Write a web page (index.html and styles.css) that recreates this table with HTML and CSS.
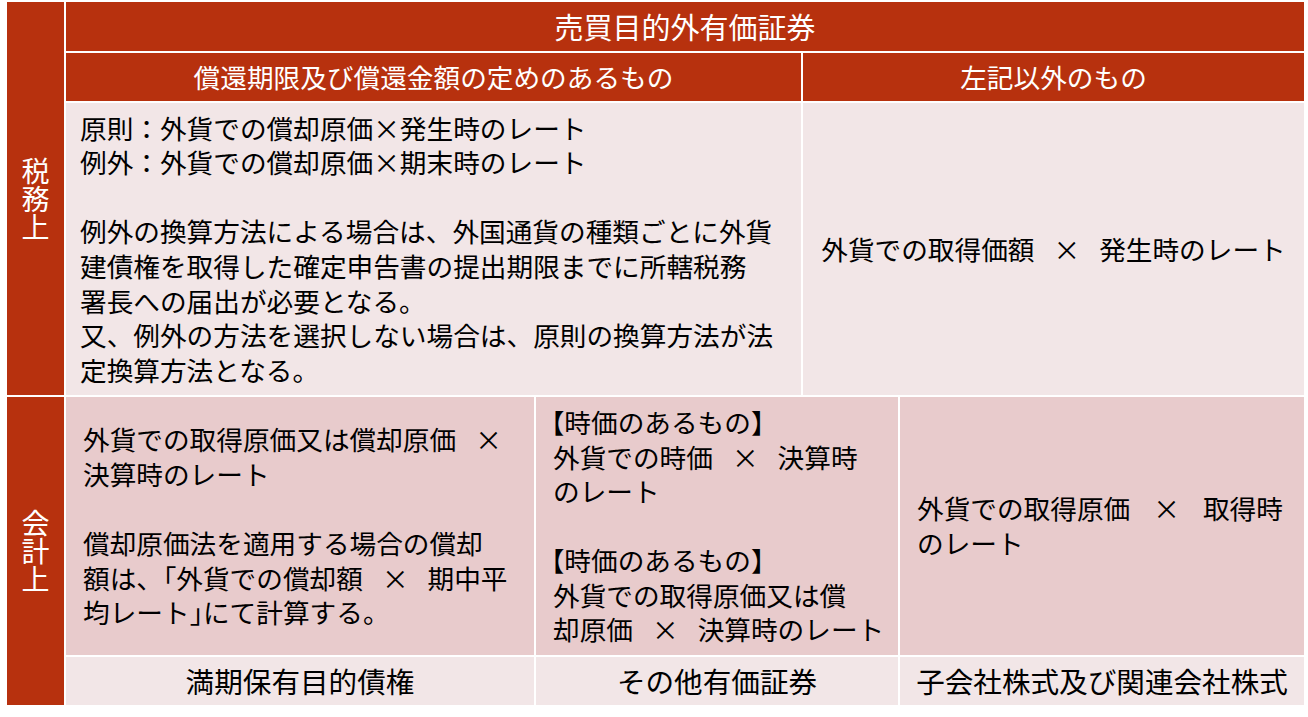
FILE: index.html
```html
<!DOCTYPE html>
<html lang="ja">
<head>
<meta charset="utf-8">
<title>売買目的外有価証券</title>
<link rel="stylesheet" href="styles.css">
</head>
<body>
<div class="table">
  <div class="label label-tax"><span class="vert">税務上</span></div>
  <div class="head head-main">売買目的外有価証券</div>
  <div class="head head-sub1">償還期限及び償還金額の定めのあるもの</div>
  <div class="head head-sub2">左記以外のもの</div>

  <div class="cell tax-left light">
    <div class="text">
      <p>原則：外貨での償却原価×発生時のレート<br>例外：外貨での償却原価×期末時のレート</p>
      <p class="gap">例外の換算方法による場合は、外国通貨の種類ごとに外貨<br>建債権を取得した確定申告書の提出期限までに所轄税務<br>署長への届出が必要となる。<br>又、例外の方法を選択しない場合は、原則の換算方法が法<br>定換算方法となる。</p>
    </div>
  </div>
  <div class="cell tax-right light center">
    <div class="text">外貨での取得価額<span class="mul">×</span>発生時のレート</div>
  </div>

  <div class="label label-acc"><span class="vert">会計上</span></div>
  <div class="cell acc-1 dark">
    <div class="text">
      <p>外貨での取得原価又は償却原価<span class="mul">×</span><br>決算時のレート</p>
      <p class="gap">償却原価法を適用する場合の償却<br>額は、<span class="br">「</span>外貨での償却額<span class="mul">×</span>期中平<br>均レート<span class="br">」</span>にて計算する。</p>
    </div>
  </div>
  <div class="cell acc-2 dark">
    <div class="text">
      <p><span class="br brl">【</span>時価のあるもの<span class="br">】</span><br>外貨での時価<span class="mul">×</span>決算時<br>のレート</p>
      <p class="gap"><span class="br brl">【</span>時価のあるもの<span class="br">】</span><br>外貨での取得原価又は償<br>却原価<span class="mul">×</span>決算時のレート</p>
    </div>
  </div>
  <div class="cell acc-3 dark">
    <div class="text">外貨での取得原価<span class="mul mul-wide">×</span>取得時<br>のレート</div>
  </div>

  <div class="foot foot-1">満期保有目的債権</div>
  <div class="foot foot-2">その他有価証券</div>
  <div class="foot foot-3">子会社株式及び関連会社株式</div>
</div>
</body>
</html>
```

FILE: styles.css
```css
html, body {
  margin: 0;
  padding: 0;
  background: #ffffff;
}

body {
  font-family: "Noto Sans CJK JP", "Noto Sans", sans-serif;
  color: #000000;
}

.table {
  display: grid;
  grid-template-columns: 57px 468px 265px 95px 404px;
  grid-template-rows: 49px 48px 292px 258px 48px;
  gap: 2px;
  padding: 2px 0 0 7px;
  width: 1297px;
  background: #ffffff;
}

.label {
  background: #b7310e;
  color: #ffffff;
  display: flex;
  align-items: center;
  justify-content: center;
}

.vert {
  writing-mode: vertical-rl;
  text-orientation: upright;
  font-size: 28px;
  line-height: 28px;
  letter-spacing: 0;
}

.label-tax {
  grid-column: 1;
  grid-row: 1 / 4;
}

.label-acc {
  grid-column: 1;
  grid-row: 4 / 6;
}

.head {
  background: #b7310e;
  color: #ffffff;
  display: flex;
  align-items: center;
  justify-content: center;
  font-size: 26.67px;
  line-height: 1.2;
  white-space: nowrap;
}

.head-main {
  grid-column: 2 / 6;
  grid-row: 1;
  font-size: 29px;
}

.head-sub1 {
  grid-column: 2 / 4;
  grid-row: 2;
}

.head-sub2 {
  grid-column: 4 / 6;
  grid-row: 2;
}

.cell {
  display: flex;
  align-items: center;
  font-size: 26.67px;
  line-height: 34.6px;
  white-space: nowrap;
}

.cell p {
  margin: 0;
}

.cell p.gap {
  margin-top: 34.6px;
}

.light {
  background: #f2e6e7;
}

.dark {
  background: #e8cbcc;
}

.center {
  justify-content: center;
}

.tax-left {
  grid-column: 2 / 4;
  grid-row: 3;
  padding: 0 0 0 14px;
}

.tax-right {
  grid-column: 4 / 6;
  grid-row: 3;
}

.acc-1 {
  grid-column: 2;
  grid-row: 4;
  padding-left: 17px;
}

.acc-2 {
  grid-column: 3 / 5;
  grid-row: 4;
  padding-left: 17px;
}

.acc-3 {
  grid-column: 5;
  grid-row: 4;
  padding-left: 17px;
}

.mul {
  display: inline-block;
  margin: 0 19px;
}

.mul-wide {
  margin: 0 23px;
}

.br {
  font-feature-settings: "halt";
}

.brl {
  margin-left: -2px;
}

.foot {
  background: #f2e6e7;
  display: flex;
  align-items: center;
  justify-content: center;
  font-size: 28.6px;
  line-height: 1.2;
  white-space: nowrap;
}

.foot-1 {
  grid-column: 2;
  grid-row: 5;
}

.foot-2 {
  grid-column: 3 / 5;
  grid-row: 5;
}

.foot-3 {
  grid-column: 5;
  grid-row: 5;
}
```
